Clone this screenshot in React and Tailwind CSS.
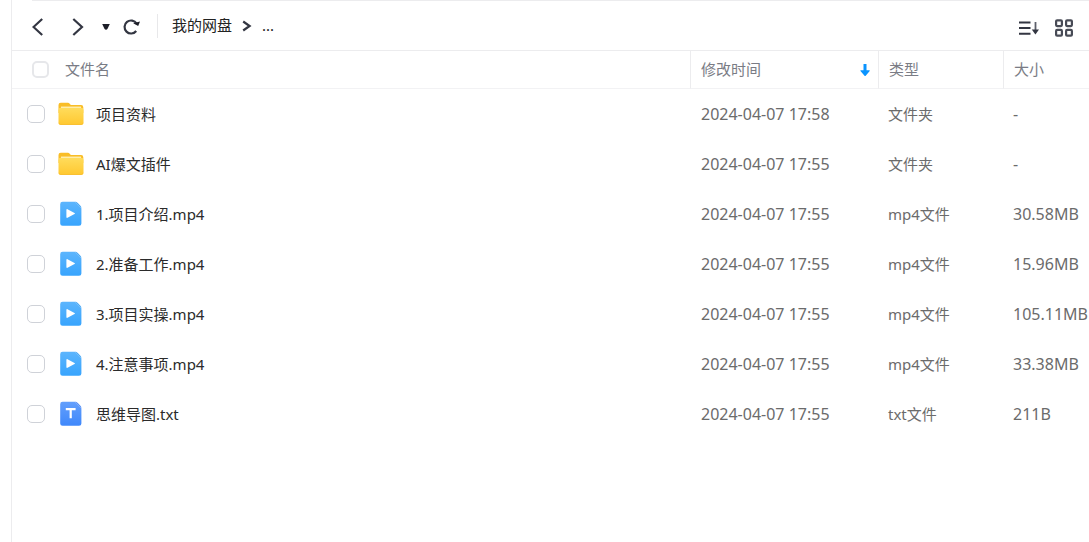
/**
 * 网盘文件列表
 */
import { useState } from 'react';

const files = [
    { name: '项目资料', time: '2024-04-07 17:58', kind: 'folder', type: '文件夹', size: '-' },
    { name: 'AI爆文插件', time: '2024-04-07 17:55', kind: 'folder', type: '文件夹', size: '-' },
    { name: '1.项目介绍.mp4', time: '2024-04-07 17:55', kind: 'video', type: 'mp4文件', size: '30.58MB' },
    { name: '2.准备工作.mp4', time: '2024-04-07 17:55', kind: 'video', type: 'mp4文件', size: '15.96MB' },
    { name: '3.项目实操.mp4', time: '2024-04-07 17:55', kind: 'video', type: 'mp4文件', size: '105.11MB' },
    { name: '4.注意事项.mp4', time: '2024-04-07 17:55', kind: 'video', type: 'mp4文件', size: '33.38MB' },
    { name: '思维导图.txt', time: '2024-04-07 17:55', kind: 'text', type: 'txt文件', size: '211B' }
];

// 文件夹图标
function FolderIcon() {
    return (
        <svg className="h-[26px] w-[26px]" viewBox="0 0 26 26" aria-hidden="true">
            <defs>
                <linearGradient id="folder" x1="0" y1="0" x2="0" y2="1">
                    <stop offset="0" stopColor="#ffdc5c" />
                    <stop offset="1" stopColor="#ffc830" />
                </linearGradient>
            </defs>
            <path d="M0.5 4a2.2 2.2 0 0 1 2.2-2.2h7.2c.8 0 1.3.3 1.8.9l1.2 1.3h10.2a2.2 2.2 0 0 1 2.2 2.2V12H.5z" fill="#f9bd27" />
            <path d="M3 5.6h20v4H3z" fill="#fff3c4" />
            <rect x="0.5" y="6.8" width="25" height="17" rx="2.2" fill="url(#folder)" />
            <path d="M.5 21.5v.3a2 2 0 0 0 2 2h21a2 2 0 0 0 2-2v-.3a2 2 0 0 1-2 1.4h-21a2 2 0 0 1-2-1.4z" fill="#f8b922" />
        </svg>
    );
}

// 视频与文本文件图标
function FileIcon({ kind }) {
    const isVideo = kind === 'video';
    return (
        <svg className="h-[26px] w-[26px]" viewBox="0 0 26 26" aria-hidden="true">
            <defs>
                <linearGradient id={kind} x1="0" y1="0" x2="0" y2="1">
                    <stop offset="0" stopColor={isVideo ? '#5cb5fd' : '#639ffc'} />
                    <stop offset="1" stopColor={isVideo ? '#38a4fd' : '#3f88fb'} />
                </linearGradient>
            </defs>
            <path d="M4.6 .8h12.1L23.4 7.5v14.9a2.4 2.4 0 0 1-2.4 2.4H4.6a2.4 2.4 0 0 1-2.4-2.4V3.2A2.4 2.4 0 0 1 4.6 .8z" fill={`url(#${kind})`} />
            <path d="M16.7 .8c1.4 0 2.2.3 3.1 1.2l2.4 2.4c.9.9 1.2 1.7 1.2 3.1z" fill={isVideo ? '#4ba9f5' : '#558ff5'} />
            {isVideo ? (
                <path d="M8.4 8.8v7.4c0 .6.6.9 1.1.6l7-3.7c.5-.3.5-.9 0-1.2l-7-3.7c-.5-.3-1.1 0-1.1.6z" fill="#fff" />
            ) : (
                <path d="M7.8 8.2h9.8M12.7 8.2v9" stroke="#fff" strokeWidth="2.2" fill="none" />
            )}
        </svg>
    );
}

function Checkbox({ className, ...props }) {
    return (
        <input
            type="checkbox"
            className={`shrink-0 appearance-none rounded-[5px] bg-white checked:border-[#06a7ff] checked:bg-[#06a7ff] ${className}`}
            {...props}
        />
    );
}

// 顶部导航与视图切换
function Toolbar() {
    return (
        <div className="flex h-[49px] items-center text-[#333642]">
            <button type="button" aria-label="后退" className="ml-5 pt-0.5">
                <svg className="h-5 w-3" viewBox="0 0 12 20" fill="none" stroke="currentColor" strokeWidth="2.2">
                    <path d="M10.2 2 1.5 10l8.7 8" />
                </svg>
            </button>
            <button type="button" aria-label="前进" className="ml-7 pt-0.5">
                <svg className="h-5 w-3" viewBox="0 0 12 20" fill="none" stroke="currentColor" strokeWidth="2.2">
                    <path d="M1.3 2 10 10l-8.7 8" />
                </svg>
            </button>
            <button type="button" aria-label="历史记录" className="ml-[18px] pt-0.5">
                <svg className="h-2 w-2" viewBox="0 0 8 8" fill="#1d1e28">
                    <path d="M0.2 1h7.6L5.4 6c-.5 1-2.3 1-2.8 0z" />
                </svg>
            </button>
            <button type="button" aria-label="刷新" className="ml-3 pt-0.5">
                <svg className="h-[18px] w-[18px]" viewBox="0 0 18 18" fill="none" stroke="currentColor" strokeWidth="2.2">
                    <path d="M14.2 13A6.5 6.5 0 1 1 14.6 5.6" />
                    <path d="M11.2 5.2 18 3.4 16.2 8z" fill="#1d1e28" stroke="none" />
                </svg>
            </button>
            <span className="ml-[17px] h-6 w-px bg-[#e8e8ea]" />
            <nav className="ml-3.5 flex items-center text-[15px] text-[#222]">
                <a href="#root">我的网盘</a>
                <svg className="mx-2.5 h-3 w-2.5 text-[#333642]" viewBox="0 0 10 12" fill="none" stroke="currentColor" strokeWidth="2.2" aria-hidden="true">
                    <path d="M1.2 1.5 7.6 6l-6.4 4.5" />
                </svg>
                <a href="#parent">...</a>
            </nav>
            <div className="mr-[15px] ml-auto flex items-center gap-[15px] pt-1">
                <button type="button" aria-label="排序">
                    <svg className="h-5 w-5" viewBox="0 0 20 20" fill="none" stroke="currentColor" strokeWidth="2">
                        <path d="M0 4.5h11.5M0 10h11.5M0 15.8h11.5" />
                        <path d="M16.5 4v10" stroke="#5d606b" strokeWidth="1.8" />
                        <path d="M12.8 11.4h7.2l-3.6 5.2z" fill="currentColor" stroke="none" />
                    </svg>
                </button>
                <button type="button" aria-label="网格视图">
                    <svg className="h-5 w-5" viewBox="0 0 20 20" fill="none" stroke="#484b56" strokeWidth="2.2">
                        <rect x="2.1" y="2.3" width="5.8" height="5.8" rx="1" />
                        <rect x="12.1" y="2.3" width="5.8" height="5.8" rx="1" />
                        <rect x="2.1" y="11.9" width="5.8" height="5.8" rx="1" />
                        <rect x="12.1" y="11.9" width="5.8" height="5.8" rx="1" />
                    </svg>
                </button>
            </div>
        </div>
    );
}

export default function App() {
    const [selected, setSelected] = useState([]);

    const toggle = (name) => {
        setSelected(selected.includes(name) ? selected.filter((n) => n !== name) : [...selected, name]);
    };

    const toggleAll = () => {
        setSelected(selected.length === files.length ? [] : files.map((f) => f.name));
    };

    return (
        <main className="ml-[11px] min-h-screen border-l border-[#ececee] bg-white font-['Noto_Sans','Noto_Sans_CJK_SC',sans-serif]">
            <div className="ml-5 h-px bg-[#ececee]" />
            <Toolbar />

            <table className="w-full table-fixed border-separate border-spacing-0 text-left text-[15px] whitespace-nowrap">
                <thead className="text-[#7a7c85]">
                    <tr className="h-[39px] *:border-y *:border-t-[#ececee] *:border-b-[#f2f2f4] *:p-0 *:font-normal">
                        <th>
                            <div className="flex items-center gap-4 pl-5">
                                <Checkbox
                                    className="h-[17px] w-[17px] border-2 border-[#e6e7ea]"
                                    aria-label="全选"
                                    checked={selected.length === files.length}
                                    onChange={toggleAll}
                                />
                                文件名
                            </div>
                        </th>
                        <th className="w-[188px] border-l border-l-[#ececee]">
                            <button type="button" className="flex w-full items-center justify-between pr-2 pl-2.5">
                                修改时间
                                <svg className="h-3 w-2.5" viewBox="0 0 10 12" fill="#0a94ff" aria-hidden="true">
                                    <path d="M3.5 0h3v6.2h2.7c.6 0 .8.5.5.9l-4 4.6c-.3.4-.9.4-1.2 0l-4-4.6c-.4-.4-.1-.9.4-.9h2.6z" />
                                </svg>
                            </button>
                        </th>
                        <th className="w-[125px] border-l border-l-[#ececee]">
                            <span className="pl-2.5">类型</span>
                        </th>
                        <th className="w-[86px] border-l border-l-[#ececee]">
                            <span className="pl-2.5">大小</span>
                        </th>
                    </tr>
                </thead>
                <tbody className="text-[#6b6b6b]">
                    {files.map((file) => (
                        <tr key={file.name} className="h-[50px] *:p-0">
                            <td>
                                <div className="flex items-center pl-[15px] text-[#2b2b2b]">
                                    <Checkbox
                                        className="h-[18px] w-[18px] border border-[#cfd2d8]"
                                        aria-label={file.name}
                                        checked={selected.includes(file.name)}
                                        onChange={() => toggle(file.name)}
                                    />
                                    <a href="#file" className="ml-[13px] flex items-center gap-3">
                                        {file.kind === 'folder' ? <FolderIcon /> : <FileIcon kind={file.kind} />}
                                        {file.name}
                                    </a>
                                </div>
                            </td>
                            <td className="text-base">
                                <span className="pl-[11px]">{file.time}</span>
                            </td>
                            <td>
                                <span className="pl-2.5">{file.type}</span>
                            </td>
                            <td className="text-base">
                                <span className="pl-2.5">{file.size}</span>
                            </td>
                        </tr>
                    ))}
                </tbody>
            </table>
        </main>
    );
}
